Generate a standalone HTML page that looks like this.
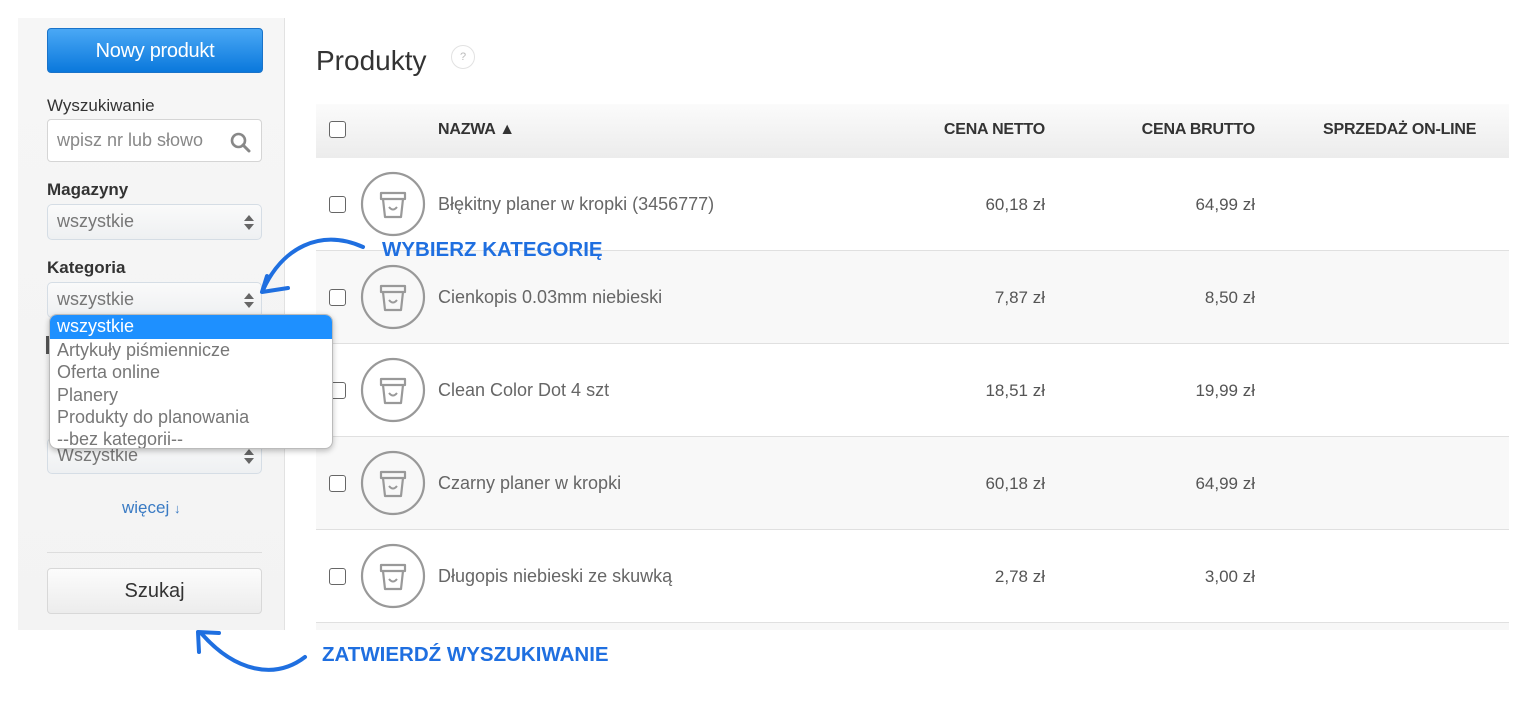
<!DOCTYPE html>
<html><head><meta charset="utf-8"><style>
*{box-sizing:border-box;margin:0;padding:0}
body{width:1515px;height:702px;background:#fff;position:relative;overflow:hidden;font-family:"Liberation Sans",Arial,sans-serif;color:#333}
.a{position:absolute}
#side{left:18px;top:18px;width:267px;height:612px;background:linear-gradient(#f6f6f6,#f3f3f3);border-right:1px solid #e2e2e2}
.btn{left:47px;top:28px;width:216px;height:45px;border-radius:4px;background:linear-gradient(#4aa8f5,#0a78dc);color:#fff;font-size:20px;text-align:center;line-height:44px;border:1px solid #1a73c9;letter-spacing:-.3px}
.lbl{left:47px;font-size:17px;color:#333}
.b{font-weight:bold}
.inp{left:47px;width:215px;height:43px;border:1px solid #d5d5d5;border-radius:4px;background:#fff;font-size:18px;color:#888;padding-left:9px;line-height:41px}
.sel{left:47px;width:215px;height:36px;border:1px solid #d5dde5;border-radius:5px;background:linear-gradient(#fafafa,#eef0f2);font-size:18px;color:#777;padding-left:9px;line-height:33px}
.arr{position:absolute;right:12px;top:10px;width:0}
.arr:before{content:"";position:absolute;left:-5px;top:0;border:5px solid transparent;border-bottom:6px solid #666;border-top:0}
.arr:after{content:"";position:absolute;left:-5px;top:9px;border:5px solid transparent;border-top:6px solid #666;border-bottom:0}
#dd{left:49px;top:314px;width:284px;height:135px;background:#fff;border:1px solid #bbb;border-radius:8px;box-shadow:0 2px 6px rgba(0,0,0,.25);overflow:hidden;font-size:18px;color:#777;z-index:10}
#dd div{height:22.3px;line-height:22px;padding-left:7px}
#dd .on{background:#1e90ff;color:#fff;height:24px}
.szukaj{left:47px;top:568px;width:215px;height:46px;border:1px solid #d8d8d8;border-radius:4px;background:linear-gradient(#fcfcfc,#ececec);font-size:20px;text-align:center;line-height:44px;color:#333}
h1{position:absolute;left:316px;top:45px;font-size:28px;font-weight:normal;color:#333}
.q{left:451px;top:45px;width:24px;height:24px;border:1px solid #e2e2e2;border-radius:50%;font-size:11px;color:#bbb;text-align:center;line-height:22px}
#thead{left:316px;top:104px;width:1193px;height:54px;background:linear-gradient(#fbfbfb,#ececec)}
.th{font-size:16px;font-weight:bold;color:#333;top:121px;letter-spacing:-.2px}
.row{left:316px;width:1193px;height:93px;border-bottom:1px solid #e0e0e0}
.cb{width:17px;height:17px;border:1.5px solid #666;border-radius:3px;background:#fff;left:329px}
.nm{left:438px;font-size:18px;color:#666}
.pr{font-size:17px;color:#555;text-align:right;width:150px}
.ann{color:#1f6fe0;font-weight:bold;font-size:20.5px;font-family:"Liberation Sans",sans-serif;z-index:11}
</style></head><body>
<div id="side" class="a"></div>
<div class="a btn">Nowy produkt</div>
<div class="a lbl" style="top:96px">Wyszukiwanie</div>
<div class="a inp" style="top:119px">wpisz nr lub słowo
<svg class="a" style="right:10px;top:12px" width="21" height="21" viewBox="0 0 21 21"><circle cx="8.5" cy="8.5" r="6.5" fill="none" stroke="#888" stroke-width="2.6"/><path d="M13 13l6 6" stroke="#888" stroke-width="3" stroke-linecap="round"/></svg></div>
<div class="a lbl b" style="top:180px">Magazyny</div>
<div class="a sel" style="top:204px">wszystkie<span class="arr"></span></div>
<div class="a lbl b" style="top:258px">Kategoria</div>
<div class="a sel" style="top:282px">wszystkie<span class="arr"></span></div>
<div class="a sel" style="top:438px">Wszystkie<span class="arr"></span></div>
<div class="a" style="left:46px;top:336px;width:4px;height:18px;background:#555"></div>
<div id="dd" class="a"><div class="on">wszystkie</div><div>Artykuły piśmiennicze</div><div>Oferta online</div><div>Planery</div><div>Produkty do planowania</div><div>--bez kategorii--</div></div>
<div class="a" style="left:122px;top:498px;font-size:17px;color:#3a7bc4">więcej <b style="font-size:13px">&#8595;</b></div>
<div class="a" style="left:47px;top:552px;width:215px;height:1px;background:#ddd"></div>
<div class="a szukaj">Szukaj</div>

<h1>Produkty</h1>
<div class="a q">?</div>
<div id="thead" class="a"></div>
<div class="a cb" style="top:121px"></div>
<div class="a th" style="left:438px">NAZWA ▲</div>
<div class="a th" style="left:895px;width:150px;text-align:right">CENA NETTO</div>
<div class="a th" style="left:1105px;width:150px;text-align:right">CENA BRUTTO</div>
<div class="a th" style="left:1323px">SPRZEDAŻ ON-LINE</div>

<div class="a row" style="top:158px;background:#fff"></div>
<div class="a row" style="top:251px;background:#f8f8f8"></div>
<div class="a row" style="top:344px;background:#fff"></div>
<div class="a row" style="top:437px;background:#f8f8f8"></div>
<div class="a row" style="top:530px;background:#fff"></div>
<div class="a" style="left:316px;top:623px;width:1193px;height:7px;background:#f7f7f7"></div>

<svg class="a" style="left:0;top:0;z-index:5" width="1515" height="702">
<defs><g id="ic"><circle cx="0" cy="0" r="31" fill="none" stroke="#999" stroke-width="2.2"/><path d="M-12-11h24v6h-24zM-10-5l2 18h16l2-18" fill="none" stroke="#999" stroke-width="2.2" stroke-linejoin="round"/><path d="M-4 3q4 5 8 0" fill="none" stroke="#999" stroke-width="2"/></g></defs>
<use href="#ic" x="393" y="204"/><use href="#ic" x="393" y="297"/><use href="#ic" x="393" y="390"/><use href="#ic" x="393" y="483"/><use href="#ic" x="393" y="576"/>
<g fill="none" stroke="#1f6fe0" stroke-width="4" stroke-linecap="round" stroke-linejoin="round">
<path d="M363 247C320 228 282 248 263 290"/><path d="M267 276L262 292L288 288"/>
<path d="M305 657C275 680 235 672 201 633"/><path d="M199 652L198 632L219 633"/>
</g></svg>

<div class="a cb" style="top:196px"></div><div class="a nm" style="top:194px">Błękitny planer w kropki (3456777)</div>
<div class="a pr" style="left:895px;top:195px">60,18 zł</div><div class="a pr" style="left:1105px;top:195px">64,99 zł</div>
<div class="a cb" style="top:289px"></div><div class="a nm" style="top:287px">Cienkopis 0.03mm niebieski</div>
<div class="a pr" style="left:895px;top:288px">7,87 zł</div><div class="a pr" style="left:1105px;top:288px">8,50 zł</div>
<div class="a cb" style="top:382px"></div><div class="a nm" style="top:380px">Clean Color Dot 4 szt</div>
<div class="a pr" style="left:895px;top:381px">18,51 zł</div><div class="a pr" style="left:1105px;top:381px">19,99 zł</div>
<div class="a cb" style="top:475px"></div><div class="a nm" style="top:473px">Czarny planer w kropki</div>
<div class="a pr" style="left:895px;top:474px">60,18 zł</div><div class="a pr" style="left:1105px;top:474px">64,99 zł</div>
<div class="a cb" style="top:568px"></div><div class="a nm" style="top:566px">Długopis niebieski ze skuwką</div>
<div class="a pr" style="left:895px;top:567px">2,78 zł</div><div class="a pr" style="left:1105px;top:567px">3,00 zł</div>

<div class="a ann" style="left:382px;top:238px">WYBIERZ KATEGORIĘ</div>
<div class="a ann" style="left:322px;top:643px">ZATWIERDŹ WYSZUKIWANIE</div>
</body></html>
